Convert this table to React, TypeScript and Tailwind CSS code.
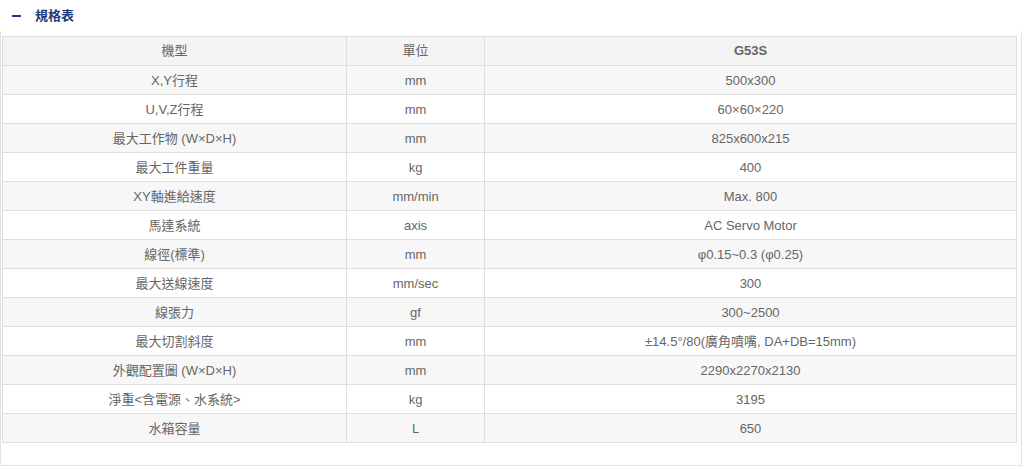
import React from "react";

const rows: [string, string, string][] = [
  ["X,Y行程", "mm", "500x300"],
  ["U,V,Z行程", "mm", "60×60×220"],
  ["最大工作物 (W×D×H)", "mm", "825x600x215"],
  ["最大工件重量", "kg", "400"],
  ["XY軸進給速度", "mm/min", "Max. 800"],
  ["馬達系統", "axis", "AC Servo Motor"],
  ["線徑(標準)", "mm", "φ0.15~0.3 (φ0.25)"],
  ["最大送線速度", "mm/sec", "300"],
  ["線張力", "gf", "300~2500"],
  ["最大切割斜度", "mm", "±14.5°/80(廣角噴嘴, DA+DB=15mm)"],
  ["外觀配置圖 (W×D×H)", "mm", "2290x2270x2130"],
  ["淨重<含電源、水系統>", "kg", "3195"],
  ["水箱容量", "L", "650"],
];

export default function App() {
  return (
    <div
      className="w-[1024px] h-[469px] bg-white overflow-hidden"
      style={{ fontFamily: '"Liberation Sans", "Noto Sans CJK TC", sans-serif' }}
    >
      <div className="flex items-center h-[31px] pl-[12px]">
        <span className="w-[9px] h-[2px] bg-[#1d3a7c] mr-[14px]" />
        <span className="text-[13px] font-bold text-[#1d3a7c]">規格表</span>
      </div>
      <div className="w-[1022px] h-[435px] border-l border-r border-b border-[#e3e3e3] pl-[1px] pt-[5px]">
        <table className="w-[1014px] border-collapse table-fixed text-[13px] text-[#666]">
          <colgroup>
            <col className="w-[344px]" />
            <col className="w-[138px]" />
            <col className="w-[532px]" />
          </colgroup>
          <thead>
            <tr className="h-[29px] bg-[#f4f4f4]">
              <th className="border border-[#dedede] font-normal text-[#666] text-center">機型</th>
              <th className="border border-[#dedede] font-normal text-[#666] text-center">單位</th>
              <th className="border border-[#dedede] font-bold text-[#666] text-center">G53S</th>
            </tr>
          </thead>
          <tbody>
            {rows.map((r, i) => (
              <tr key={i} className={i % 2 === 0 ? "h-[29px] bg-[#f7f7f7]" : "h-[29px] bg-white"}>
                <td className="border border-[#dedede] text-center leading-none">{r[0]}</td>
                <td className="border border-[#dedede] text-center leading-none">{r[1]}</td>
                <td className="border border-[#dedede] text-center leading-none">{r[2]}</td>
              </tr>
            ))}
          </tbody>
        </table>
      </div>
    </div>
  );
}
